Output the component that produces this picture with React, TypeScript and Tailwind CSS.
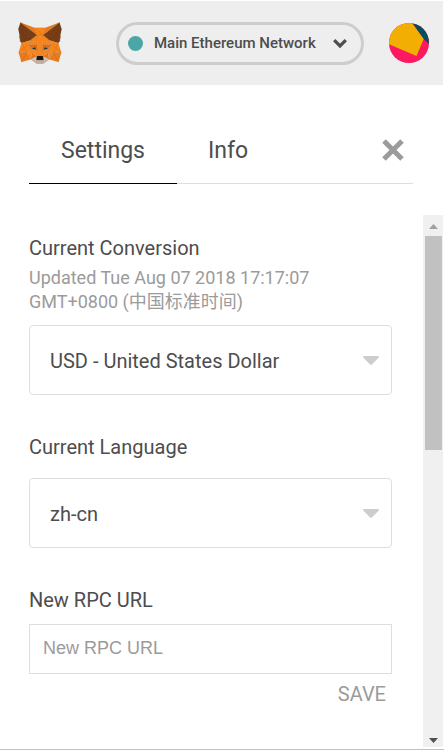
type Facet = [fill: string, points: string];

const foxFacets: Facet[] = [
  ["#e8791b", "274.1,35.5 174.6,109.4 193,65.8"],
  ["#e8791b", "44.4,35.5 143.1,110.1 125.6,65.8"],
  ["#ea7a1b", "238.3,206.8 211.8,247.4 268.5,263 284.8,207.7"],
  ["#ea7a1b", "33.9,207.7 50.1,263 106.8,247.4 80.3,206.8"],
  ["#f6851b", "103.6,138.2 87.8,162.1 144.1,164.6 142.1,104.1"],
  ["#f6851b", "214.9,138.2 175.9,103.4 174.6,164.6 230.8,162.1"],
  ["#e4761b", "106.8,247.4 140.6,230.9 111.4,208.1"],
  ["#e4761b", "177.9,230.9 211.8,247.4 207.1,208.1"],
  ["#d7c1b3", "211.8,247.4 177.9,230.9 180.6,253 180.3,262.3"],
  ["#d7c1b3", "106.8,247.4 138.3,262.3 138.1,253 140.6,230.9"],
  ["#f6851b", "106.8,247.4 111.6,206.8 80.3,207.7"],
  ["#f6851b", "207,206.8 211.8,247.4 238.3,207.7"],
  ["#df6e16", "230.8,162.1 174.6,164.6 179.8,193.5 188.1,176.1 208.1,185.2"],
  ["#df6e16", "110.6,185.2 130.6,176.1 138.8,193.5 144.1,164.6 87.8,162.1"],
  ["#e4751f", "87.8,162.1 111.4,208.1 110.6,185.2"],
  ["#e4751f", "208.1,185.2 207.1,208.1 230.8,162.1"],
  ["#e4751f", "144.1,164.6 138.8,193.5 145.4,227.6 146.9,182.7"],
  ["#e4751f", "174.6,164.6 171.9,182.6 173.1,227.6 179.8,193.5"],
  ["#f6851b", "179.8,193.5 173.1,227.6 177.9,230.9 207.1,208.1 208.1,185.2"],
  ["#f6851b", "110.6,185.2 111.4,208.1 140.6,230.9 145.4,227.6 138.8,193.5"],
  ["#233447", "138.8,193.5 110.6,185.2 130.5,176.1"],
  ["#233447", "179.7,193.5 188,176.1 208,185.2"],
  ["#c0ad9e", "180.3,262.3 180.6,253 178.1,250.8 140.4,250.8 138.1,253 138.3,262.3 106.8,247.4 117.8,256.4 140.1,271.9 178.4,271.9 200.8,256.4 211.8,247.4"],
  ["#161616", "177.9,230.9 173.1,227.6 145.4,227.6 140.6,230.9 138.1,253 140.4,250.8 178.1,250.8 180.6,253"],
  ["#763d16", "278.3,114.2 286.8,73.4 274.1,35.5 177.9,106.9 214.9,138.2 267.2,153.5 278.8,140 273.8,136.4 281.8,129.1 275.6,124.3 283.6,118.2"],
  ["#763d16", "31.8,73.4 40.3,114.2 34.9,118.2 42.9,124.3 36.8,129.1 44.8,136.4 39.8,140 51.3,153.5 103.6,138.2 140.6,106.9 44.4,35.5"],
  ["#f6851b", "267.2,153.5 214.9,138.2 230.8,162.1 207.1,208.1 238.3,207.7 284.8,207.7"],
  ["#f6851b", "103.6,138.2 51.3,153.5 33.9,207.7 80.3,207.7 111.4,208.1 87.8,162.1"],
  ["#f6851b", "174.6,164.6 177.9,106.9 193.1,65.8 125.6,65.8 140.6,106.9 144.1,164.6 145.3,182.8 145.4,227.6 173.1,227.6 173.3,182.8"],
];

function Fox() {
  return (
    <svg viewBox="30 33 259 241" preserveAspectRatio="none" className="h-[42px] w-[44px]" role="img" aria-label="MetaMask">
      {foxFacets.map(([fill, points]) => (
        <polygon key={points} points={points} fill={fill} stroke="#5c2a0a" strokeOpacity="0.25" strokeWidth="1.5" />
      ))}
      <path
        d="M31.8 73.4 103.6 138.2M44.4 35.5 72 150M286.8 73.4 214.9 138.2M274.1 35.5 246 150M51.3 153.5 80.3 207.7M33.9 207.7 87.8 162.1M267.2 153.5 238.3 207.7M284.8 207.7 230.8 162.1M140.6 106.9H177.9M125.6 65.8 177.9 106.9M50 263 80 207M268 263 238 207"
        fill="none"
        stroke="#5c2a0a"
        strokeOpacity="0.35"
        strokeWidth="2"
      />
    </svg>
  );
}

function Identicon() {
  return (
    <svg viewBox="0 0 40 40" className="size-10">
      <defs>
        <clipPath id="avatar">
          <circle cx="20" cy="20" r="20" />
        </clipPath>
      </defs>
      <g clipPath="url(#avatar)">
        <rect width="40" height="40" fill="#fc1960" />
        <polygon points="20,-5 45,-5 45,25 34.5,16" fill="#034f5d" />
        <polygon points="-2,20.5 27.5,33 34.7,16 23,0 -2,-8" fill="#f2ae03" />
      </g>
    </svg>
  );
}

function Dropdown({ id, label, note, value }: { id: string; label: string; note?: string; value: string }) {
  return (
    <div className="flex flex-col">
      <label htmlFor={id} className="text-[20px] leading-6">
        {label}
      </label>
      {note ? <p className="mt-1.5 mb-[11px] text-[18px] leading-6 text-[#9b9b9b]">{note}</p> : <div className="h-[19px]" />}
      <div className="grid items-center">
        <select
          id={id}
          className="col-start-1 row-start-1 h-[70px] w-full appearance-none rounded border border-[#dedede] bg-white px-5 pt-0.5 text-[20px]"
        >
          <option>{value}</option>
        </select>
        <svg viewBox="0 0 16 9" className="pointer-events-none col-start-1 row-start-1 mr-[13px] h-[9px] w-4 justify-self-end">
          <path d="M1 0H15Q16.500 0.500 15.500 1.800L9.200 8.200Q8 9.400 6.800 8.200L0.500 1.800Q-0.500 0.500 1 0Z" fill="#cdcdcd" />
        </svg>
      </div>
    </div>
  );
}

function Scrollbar() {
  return (
    <div className="mb-0.5 flex w-5 shrink-0 flex-col items-center bg-[#f0f0f0]" aria-hidden="true">
      <div className="flex h-[21px] items-center">
        <svg viewBox="0 0 9 5" className="mt-0.5 h-[5px] w-[9px]">
          <path d="M0 5 4.500 0 9 5Z" fill="#a0a0a0" />
        </svg>
      </div>
      <div className="h-[214px] w-[17px] bg-[#c1c1c1]" />
      <svg viewBox="0 0 9 5" className="mt-auto mb-1 h-[5px] w-[9px]">
        <path d="M0 0 4.500 5 9 0Z" fill="#505050" />
      </svg>
    </div>
  );
}

export default function App() {
  return (
    <div className="flex min-h-screen flex-col border-t border-b border-t-white border-b-[#c0c0c0] bg-white pr-px font-[Roboto,'Noto_Sans_CJK_SC',sans-serif] text-[#4d4d4d]">
      <header className="flex h-[84px] items-center justify-between bg-[#eee] pr-3.5 pl-[18px]">
        <Fox />
        <div className="flex items-center gap-[25px]">
          <button
            type="button"
            className="flex h-[43px] w-[248px] items-center rounded-full border-3 border-[#cdcdcd] pr-3.5 pl-[9px] text-[15px] font-medium"
          >
            <span className="size-[15px] rounded-full bg-[#4ba6a6]" />
            <span className="ml-[11px]">Main Ethereum Network</span>
            <svg viewBox="0 0 14 9" className="ml-auto h-[9px] w-3.5">
              <path d="M1.200 1.200 7 7 12.800 1.200" fill="none" stroke="#4d4d4d" strokeWidth="3.200" />
            </svg>
          </button>
          <button type="button" aria-label="Account">
            <Identicon />
          </button>
        </div>
      </header>

      <nav className="mr-[30px] ml-[29px] flex h-[99px] items-end border-b border-[#dedede]">
        <button type="button" className="-mb-px h-16 border-b border-black px-8 text-[23px]">
          Settings
        </button>
        <button type="button" className="-mb-px h-16 border-b border-transparent px-[31px] text-[23px]">
          Info
        </button>
        <button type="button" aria-label="Close" className="mr-[9px] mb-[22px] ml-auto">
          <svg viewBox="0 0 22 22" className="size-[22px]">
            <path d="M2 2 20 20M20 2 2 20" stroke="#9b9b9b" strokeWidth="5" />
          </svg>
        </button>
      </nav>

      <main className="mt-[31px] flex grow">
        <div className="flex grow flex-col pt-[21px] pr-[31px] pl-[29px]">
          <Dropdown
            id="currency"
            label="Current Conversion"
            note="Updated Tue Aug 07 2018 17:17:07 GMT+0800 (中国标准时间)"
            value="USD - United States Dollar"
          />
          <div className="h-10" />
          <Dropdown id="language" label="Current Language" value="zh-cn" />
          <div className="h-10" />
          <label htmlFor="rpc" className="text-[20px] leading-6">
            New RPC URL
          </label>
          <input
            id="rpc"
            type="text"
            placeholder="New RPC URL"
            className="mt-3 h-[50px] w-full border border-[#dedede] px-[13px] pb-0.5 font-['Liberation_Sans',sans-serif] text-[18px] placeholder:text-[#9b9b9b]"
          />
          <button type="button" className="mt-2 mr-1.5 self-end text-[20px] leading-6 text-[#9b9b9b]">
            SAVE
          </button>
        </div>
        <Scrollbar />
      </main>
    </div>
  );
}
